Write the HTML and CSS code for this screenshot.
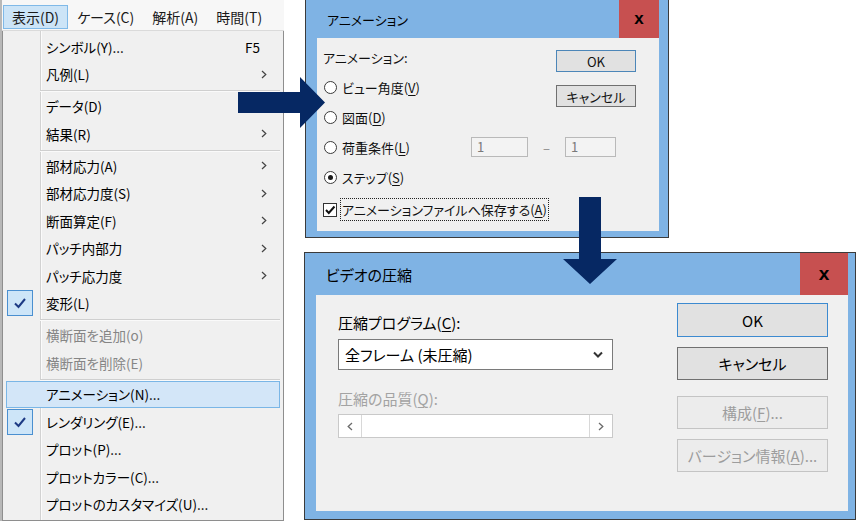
FILE: index.html
```html
<!DOCTYPE html>
<html lang="ja">
<head>
    <meta charset="UTF-8">
    <title>アニメーション</title>
    <link rel="stylesheet" href="styles.css">
</head>
<body>
<div class="canvas">

    <!-- 表示メニュー -->
    <div class="menu">
        <div class="menubar">
            <span class="menubar-item active">表示(D)</span>
            <span class="menubar-item">ケース(C)</span>
            <span class="menubar-item">解析(A)</span>
            <span class="menubar-item">時間(T)</span>
        </div>
        <div class="dropdown">
            <div class="item"><span class="gutter"></span><span class="label">シンボル(Y)...</span><span class="key">F5</span></div>
            <div class="item"><span class="gutter"></span><span class="label">凡例(L)</span><svg class="sub" viewBox="0 0 6 9"><path d="M1 1 L4.8 4.5 L1 8"/></svg></div>
            <div class="sep"></div>
            <div class="item"><span class="gutter"></span><span class="label">データ(D)</span></div>
            <div class="item"><span class="gutter"></span><span class="label">結果(R)</span><svg class="sub" viewBox="0 0 6 9"><path d="M1 1 L4.8 4.5 L1 8"/></svg></div>
            <div class="sep"></div>
            <div class="item"><span class="gutter"></span><span class="label">部材応力(A)</span><svg class="sub" viewBox="0 0 6 9"><path d="M1 1 L4.8 4.5 L1 8"/></svg></div>
            <div class="item"><span class="gutter"></span><span class="label">部材応力度(S)</span><svg class="sub" viewBox="0 0 6 9"><path d="M1 1 L4.8 4.5 L1 8"/></svg></div>
            <div class="item"><span class="gutter"></span><span class="label">断面算定(F)</span><svg class="sub" viewBox="0 0 6 9"><path d="M1 1 L4.8 4.5 L1 8"/></svg></div>
            <div class="item"><span class="gutter"></span><span class="label">パッチ内部力</span><svg class="sub" viewBox="0 0 6 9"><path d="M1 1 L4.8 4.5 L1 8"/></svg></div>
            <div class="item"><span class="gutter"></span><span class="label">パッチ応力度</span><svg class="sub" viewBox="0 0 6 9"><path d="M1 1 L4.8 4.5 L1 8"/></svg></div>
            <div class="item"><span class="gutter checked"><svg viewBox="0 0 14 12"><path d="M2 6.5 L5.5 10 L12 2"/></svg></span><span class="label">変形(L)</span></div>
            <div class="sep"></div>
            <div class="item disabled"><span class="gutter"></span><span class="label">横断面を追加(o)</span></div>
            <div class="item disabled"><span class="gutter"></span><span class="label">横断面を削除(E)</span></div>
            <div class="sep"></div>
            <div class="item hover"><span class="gutter"></span><span class="label">アニメーション(N)...</span></div>
            <div class="item"><span class="gutter checked"><svg viewBox="0 0 14 12"><path d="M2 6.5 L5.5 10 L12 2"/></svg></span><span class="label">レンダリング(E)...</span></div>
            <div class="item"><span class="gutter"></span><span class="label">プロット(P)...</span></div>
            <div class="item"><span class="gutter"></span><span class="label">プロットカラー(C)...</span></div>
            <div class="item"><span class="gutter"></span><span class="label">プロットのカスタマイズ(U)...</span></div>
        </div>
    </div>

    <!-- アニメーション ダイアログ -->
    <div class="dialog dlg-anim">
        <div class="titlebar">
            <span class="title">アニメーション</span>
            <span class="close">x</span>
        </div>
        <div class="body">
            <div class="row">アニメーション:</div>
            <div class="buttons">
                <div class="btn default">OK</div>
                <div class="btn">キャンセル</div>
            </div>
            <div class="row"><span class="radio"></span>ビュー角度(<u>V</u>)</div>
            <div class="row"><span class="radio"></span>図面(<u>D</u>)</div>
            <div class="row wide">
                <span class="row-label"><span class="radio"></span>荷重条件(<u>L</u>)</span>
                <span class="field">1</span>
                <span class="dash">–</span>
                <span class="field short">1</span>
            </div>
            <div class="row"><span class="radio on"></span>ステップ(<u>S</u>)</div>
            <div class="row check-row">
                <span class="checkbox"><svg viewBox="0 0 12 12"><path d="M2 6 L4.8 9 L10.5 2.5"/></svg></span>
                <span class="focus">アニメーションファイルへ保存する(<u>A</u>)</span>
            </div>
        </div>
    </div>

    <!-- ビデオの圧縮 ダイアログ -->
    <div class="dialog dlg-video">
        <div class="titlebar">
            <span class="title">ビデオの圧縮</span>
            <span class="close">x</span>
        </div>
        <div class="body">
            <div class="col-left">
                <div class="field-label">圧縮プログラム(<u>C</u>):</div>
                <div class="select">
                    <span>全フレーム (未圧縮)</span>
                    <svg viewBox="0 0 10 7"><path d="M1 1.5 L5 5.5 L9 1.5"/></svg>
                </div>
                <div class="field-label disabled">圧縮の品質(<u>Q</u>):</div>
                <div class="scrollbar">
                    <span class="scroll-btn"><svg viewBox="0 0 6 9"><path d="M5 1 L1.2 4.5 L5 8"/></svg></span>
                    <span class="scroll-track"></span>
                    <span class="scroll-btn"><svg viewBox="0 0 6 9"><path d="M1 1 L4.8 4.5 L1 8"/></svg></span>
                </div>
            </div>
            <div class="col-right">
                <div class="btn default">OK</div>
                <div class="btn">キャンセル</div>
                <div class="btn disabled gap">構成(<u>F</u>)...</div>
                <div class="btn disabled">バージョン情報(<u>A</u>)...</div>
            </div>
        </div>
    </div>

    <!-- 矢印 -->
    <svg class="arrow arrow-right" viewBox="0 0 87 52"><path d="M0 15 H62 V0 L87 25.5 L62 51 V36 H0 Z"/></svg>
    <svg class="arrow arrow-down" viewBox="0 0 54 87"><path d="M16 0 H38 V62 H54 L27 87 L0 62 H16 Z"/></svg>

</div>
</body>
</html>
```

FILE: styles.css
```css
* {
    box-sizing: border-box;
}
body {
    margin: 0;
    background: #fff;
    font-family: "Noto Sans CJK JP", "Noto Sans", sans-serif;
    font-feature-settings: "palt";
    color: #000;
}
u {
    text-decoration-thickness: 1px;
    text-underline-offset: 2px;
}
.canvas {
    position: relative;
    width: 857px;
    height: 522px;
    overflow: hidden;
}

/* メニュー */
.menu {
    position: absolute;
    left: 0;
    top: 0;
    width: 284px;
    height: 521px;
    display: flex;
    flex-direction: column;
    border-left: 2px solid #b8b8b8;
}
.menubar {
    height: 31px;
    display: flex;
    align-items: flex-start;
    padding: 5px 0 0 1px;
    background: #f7f7f7;
    border-bottom: 1px solid #dadada;
    font-size: 14px;
    white-space: nowrap;
}
.menubar-item {
    flex-shrink: 0;
    height: 24px;
    line-height: 22px;
    padding: 0 8px;
    border: 1px solid transparent;
    color: #1a1a1a;
}
.menubar-item.active {
    background: #cce4f7;
    border-color: #7fb9e8;
}
.dropdown {
    flex: 1;
    background: linear-gradient(to right, transparent 37px, #d2d2d2 37px, #d2d2d2 38px, #fbfbfb 38px, #fbfbfb 39px, transparent 39px), #f0f0f0;
    border: 1px solid #8e8e8e;
    border-top: none;
    padding: 2px 3px 0 3px;
    font-size: 13.5px;
}
.item {
    height: 27.5px;
    display: flex;
    align-items: center;
    border: 1px solid transparent;
    white-space: nowrap;
}
.item.hover {
    background: #d3e6f8;
    border-color: #7ab6e6;
    height: 26.5px;
    margin: 0.5px 0;
}
.item.disabled {
    color: #858585;
}
.gutter {
    width: 26px;
    height: 26px;
    margin-right: 13px;
    display: flex;
    align-items: center;
    justify-content: center;
}
.gutter.checked {
    background: #cde5f8;
    border: 1px solid #4a8fd0;
}
.gutter svg {
    width: 14px;
    height: 12px;
    fill: none;
    stroke: #1d3a84;
    stroke-width: 2;
}
.key {
    margin-left: auto;
    margin-right: 19px;
}
.sub {
    margin-left: auto;
    margin-right: 12px;
    width: 6px;
    height: 9px;
    fill: none;
    stroke: #444;
    stroke-width: 1.2;
}
.sep {
    height: 1px;
    margin: 2px 0 1.5px 34px;
    background: #cfcfcf;
    box-shadow: 0 1px 0 #fafafa;
}

/* ダイアログ共通 */
.dialog {
    position: absolute;
    display: flex;
    flex-direction: column;
    background: #7fb3e4;
    border: 1px solid #3b3b3b;
    white-space: nowrap;
}
.titlebar {
    display: flex;
    align-items: flex-start;
}
.title {
    align-self: center;
}
.close {
    margin-left: auto;
    background: #c75050;
    color: #000;
    font-family: "Liberation Sans", sans-serif;
    font-weight: bold;
    display: flex;
    align-items: center;
    justify-content: center;
}
.body {
    flex: 1;
    background: #f0f0f0;
}
.btn {
    display: flex;
    align-items: center;
    justify-content: center;
    background: #e1e1e1;
    border: 1px solid #707070;
}
.btn.default {
    border-color: #3c8ad0;
}
.btn.disabled {
    color: #9d9d9d;
    background: #ececec;
    border-color: #c4c4c4;
}

/* アニメーション */
.dlg-anim {
    left: 305px;
    top: -1px;
    width: 364px;
    height: 239px;
    font-size: 13px;
}
.dlg-anim .titlebar {
    height: 38px;
    padding: 0 9px 0 21px;
}
.dlg-anim .close {
    width: 40px;
    height: 38px;
    font-size: 17px;
}
.dlg-anim .body {
    margin: 0 9px 6px 11px;
    padding: 4px 23px 0 6px;
    display: grid;
    grid-template-columns: 1fr 80px;
    grid-auto-rows: 30px;
    color: #111;
}
.dlg-anim .row {
    grid-column: 1;
    display: flex;
    align-items: center;
}
.dlg-anim .row.wide {
    grid-column: 1 / -1;
}
.dlg-anim .buttons {
    grid-column: 2;
    grid-row: 1 / span 3;
    display: flex;
    flex-direction: column;
    gap: 13px;
    padding-top: 8px;
}
.dlg-anim .btn {
    height: 22px;
}
.dlg-anim .btn.default {
    border-color: #4c86b8;
}
.radio {
    width: 13px;
    height: 13px;
    margin: 0 5px 0 1px;
    border: 1px solid #3a3a3a;
    border-radius: 50%;
    background: #fff;
    display: flex;
    align-items: center;
    justify-content: center;
}
.radio.on::after {
    content: "";
    width: 5px;
    height: 5px;
    border-radius: 50%;
    background: #1a1a1a;
}
.row-label {
    width: 148px;
    display: flex;
    align-items: center;
}
.field {
    width: 57px;
    height: 20px;
    border: 1px solid #b9b9b9;
    background: #f3f3f3;
    color: #7a7a7a;
    padding-left: 5px;
    line-height: 18px;
}
.field.short {
    width: 51px;
}
.dash {
    width: 37px;
    text-align: center;
    color: #8a8a8a;
}
.check-row {
    margin-top: 5px;
}
.checkbox {
    width: 14px;
    height: 14px;
    border: 1px solid #333;
    background: #fff;
    margin-right: 3px;
    display: flex;
}
.checkbox svg {
    width: 12px;
    height: 12px;
    fill: none;
    stroke: #111;
    stroke-width: 2;
}
.focus {
    border: 1px dotted #222;
    padding: 1px 1px;
}

/* ビデオの圧縮 */
.dlg-video {
    left: 304px;
    top: 252px;
    width: 552px;
    height: 268px;
    font-size: 15px;
}
.dlg-video .titlebar {
    height: 42px;
    padding: 0 7px 0 21px;
}
.dlg-video .close {
    width: 48px;
    height: 42px;
    font-size: 19px;
}
.dlg-video .body {
    margin: 0 7px 8px 11px;
    padding: 0 20px 0 22px;
    display: flex;
    justify-content: space-between;
}
.col-left {
    width: 275px;
    display: flex;
    flex-direction: column;
    padding-top: 18px;
}
.field-label {
    line-height: 20px;
    height: 20px;
}
.field-label.disabled {
    color: #a3a3a3;
    margin-top: 19px;
}
.select {
    margin-top: 6px;
    height: 31px;
    border: 1px solid #7a7a7a;
    background: #fff;
    display: flex;
    align-items: center;
    padding: 0 9px 0 6px;
}
.select svg {
    margin-left: auto;
    width: 10px;
    height: 7px;
    fill: none;
    stroke: #333;
    stroke-width: 2;
}
.scrollbar {
    margin-top: 5px;
    height: 24px;
    display: flex;
    border: 1px solid #c9c9c9;
    background: #fff;
}
.scroll-btn {
    width: 23px;
    display: flex;
    align-items: center;
    justify-content: center;
}
.scroll-btn:first-child {
    border-right: 1px solid #d8d8d8;
}
.scroll-btn:last-child {
    border-left: 1px solid #d8d8d8;
}
.scroll-btn svg {
    width: 6px;
    height: 9px;
    fill: none;
    stroke: #6a6a6a;
    stroke-width: 1.3;
}
.scroll-track {
    flex: 1;
}
.col-right {
    width: 151px;
    display: flex;
    flex-direction: column;
    gap: 10px;
    padding-top: 8px;
}
.col-right .btn {
    height: 33px;
}
.col-right .btn.default {
    height: 34px;
}
.col-right .btn.gap {
    margin-top: 6px;
}

/* 矢印 */
.arrow {
    position: absolute;
    fill: #062863;
}
.arrow-right {
    left: 238px;
    top: 77px;
    width: 87px;
    height: 52px;
}
.arrow-down {
    left: 563px;
    top: 197px;
    width: 54px;
    height: 87px;
}
```
